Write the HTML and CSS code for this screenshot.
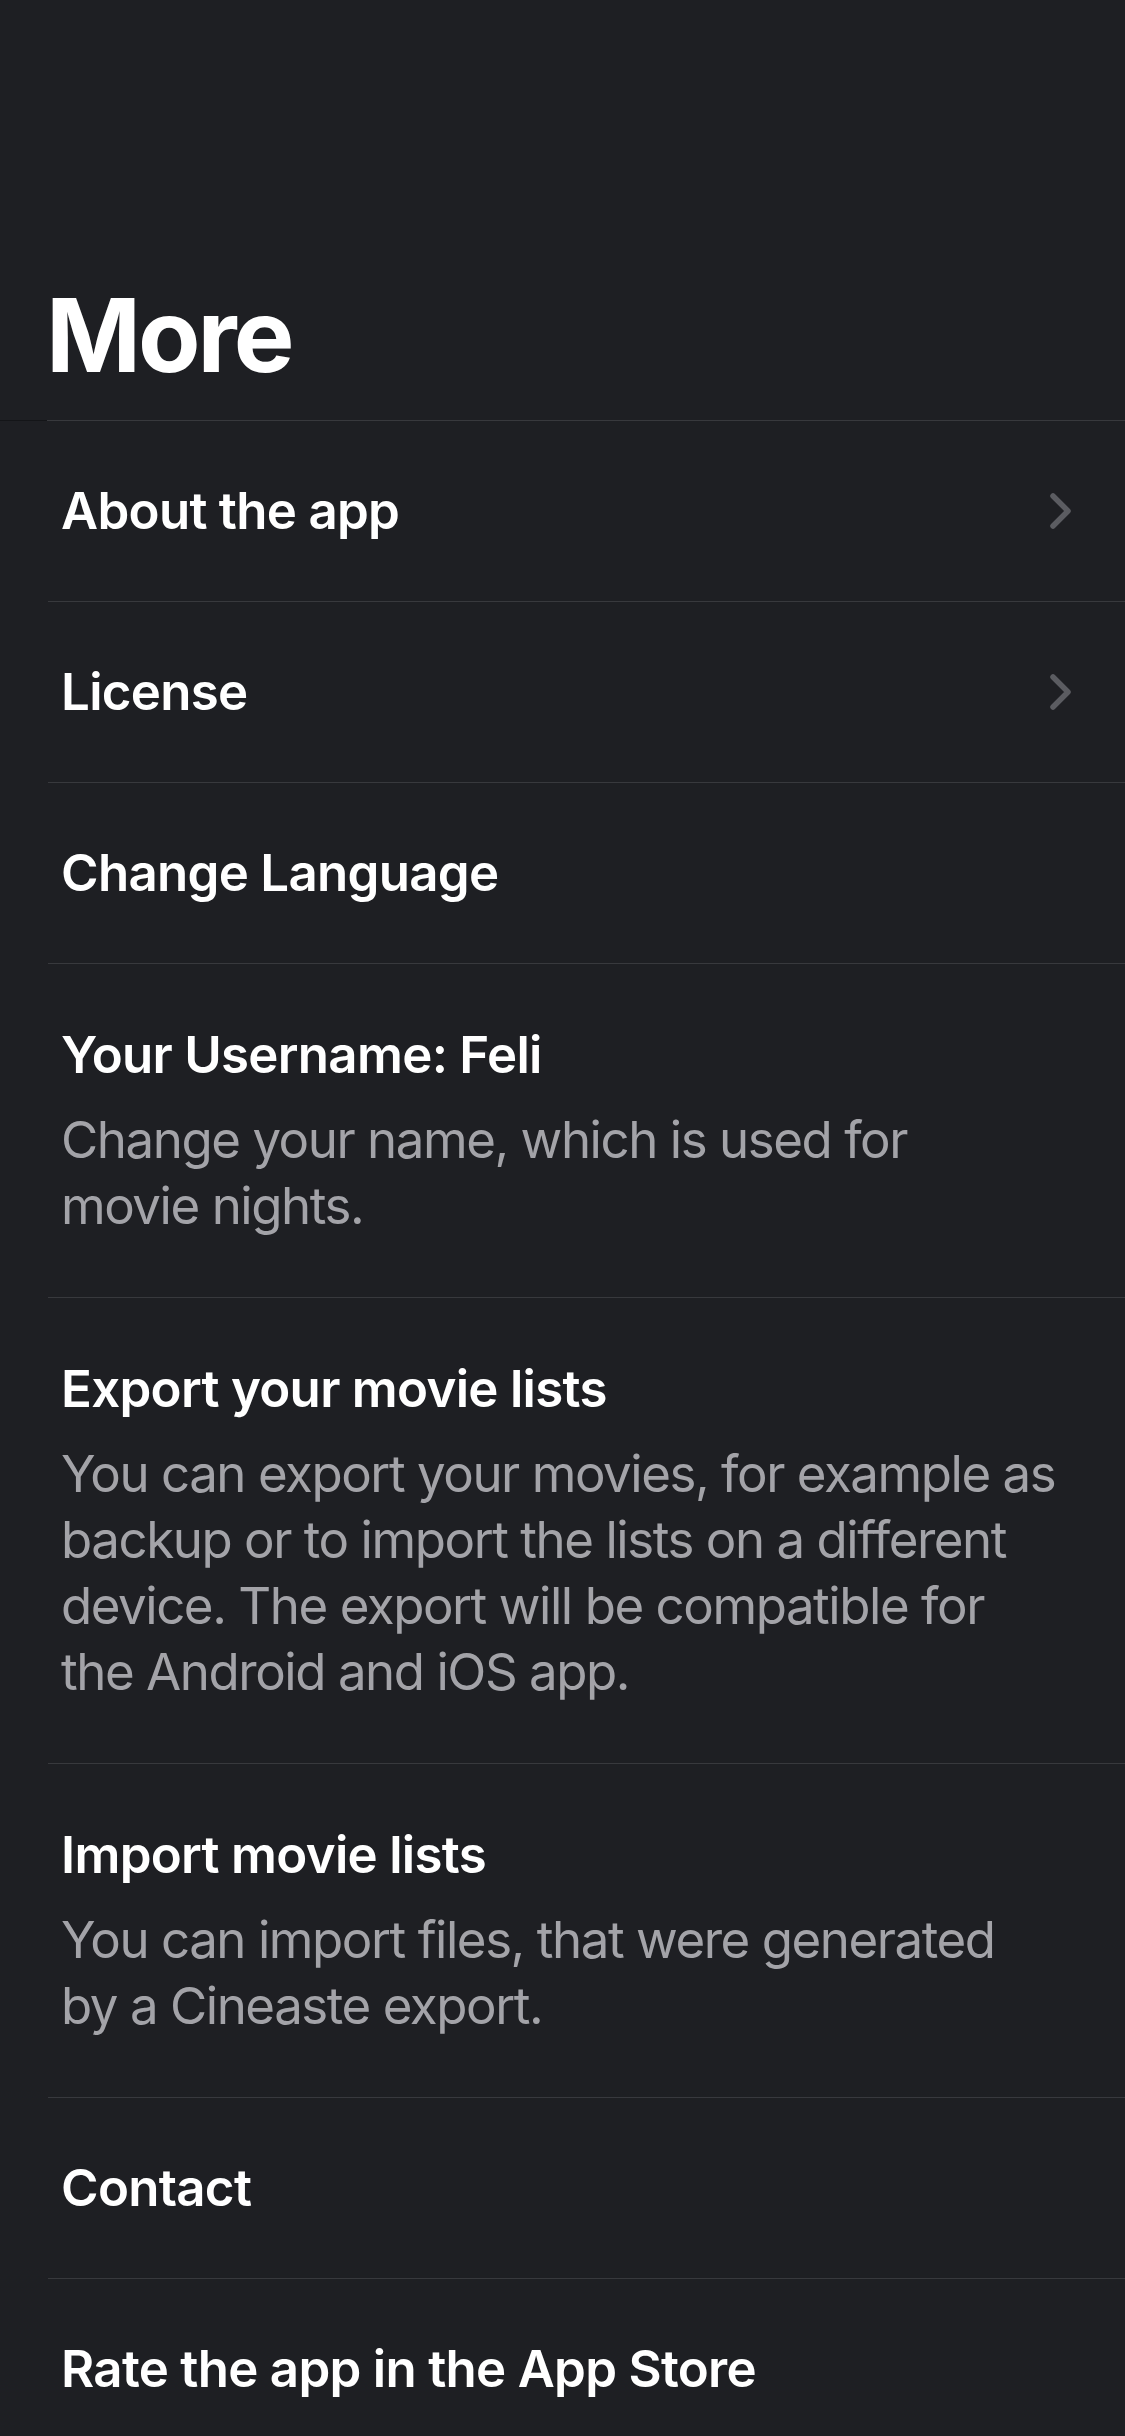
FILE: index.html
```html
<!DOCTYPE html>
<html lang="en">
<head>
<meta charset="utf-8">
<title>More</title>
<link rel="stylesheet" href="styles.css">
</head>
<body>
<div class="screen">
  <header class="header">
    <h1 class="large-title">More</h1>
  </header>
  <ul class="list">
    <li class="row single">
      <div class="text"><div class="title">About the app</div></div>
      <svg class="chev" viewBox="0 0 24 40" width="24" height="40"><polyline points="5,5 20,20 5,35" fill="none" stroke="#5b5c61" stroke-width="5.5" stroke-linecap="round" stroke-linejoin="round"/></svg>
    </li>
    <li class="row single">
      <div class="text"><div class="title">License</div></div>
      <svg class="chev" viewBox="0 0 24 40" width="24" height="40"><polyline points="5,5 20,20 5,35" fill="none" stroke="#5b5c61" stroke-width="5.5" stroke-linecap="round" stroke-linejoin="round"/></svg>
    </li>
    <li class="row single">
      <div class="text"><div class="title">Change Language</div></div>
    </li>
    <li class="row multi">
      <div class="text">
        <div class="title">Your Username: Feli</div>
        <div class="subtitle">Change your name, which is used for<br>movie nights.</div>
      </div>
    </li>
    <li class="row multi">
      <div class="text">
        <div class="title">Export your movie lists</div>
        <div class="subtitle">You can export your movies, for example as<br>backup or to import the lists on a different<br>device. The export will be compatible for<br>the Android and iOS app.</div>
      </div>
    </li>
    <li class="row multi">
      <div class="text">
        <div class="title">Import movie lists</div>
        <div class="subtitle">You can import files, that were generated<br>by a Cineaste export.</div>
      </div>
    </li>
    <li class="row single">
      <div class="text"><div class="title">Contact</div></div>
    </li>
    <li class="row single">
      <div class="text"><div class="title">Rate the app in the App Store</div></div>
    </li>
  </ul>
</div>
</body>
</html>
```

FILE: styles.css
```css
html, body {
  margin: 0;
  padding: 0;
  background: #1e1f23;
}
body {
  font-family: Inter, "Noto Sans", "Liberation Sans", sans-serif;
  color: #ffffff;
  -webkit-font-smoothing: antialiased;
}
.screen {
  width: 1125px;
  height: 2436px;
  overflow: hidden;
  background: #1e1f23;
}
.header {
  padding: 274px 0 23px 46px;
  border-bottom: 1px solid;
  border-image: linear-gradient(to right, #141518 48px, #38393d 48px) 1;
}
.large-title {
  margin: 0;
  font-size: 102px;
  line-height: 123px;
  font-weight: 700;
  letter-spacing: -3px;
}
.list {
  list-style: none;
  margin: 0 0 0 48px;
  padding: 0;
}
.row {
  display: flex;
  align-items: center;
  border-bottom: 1px solid #38393d;
  padding-left: 13px;
  padding-right: 53px;
}
.row.single {
  height: 181px;
  box-sizing: border-box;
}
.row.multi {
  padding-top: 58px;
  padding-bottom: 58px;
  padding-right: 20px;
}
.text {
  flex: 1;
  min-width: 0;
}
.title {
  font-size: 51px;
  line-height: 66px;
  font-weight: 600;
  letter-spacing: -0.7px;
}
.subtitle {
  margin-top: 19px;
  font-size: 51px;
  line-height: 66px;
  font-weight: 400;
  color: #a3a3a8;
  letter-spacing: -1.45px;
  white-space: nowrap;
}
.chev {
  display: block;
  flex: none;
}
```
